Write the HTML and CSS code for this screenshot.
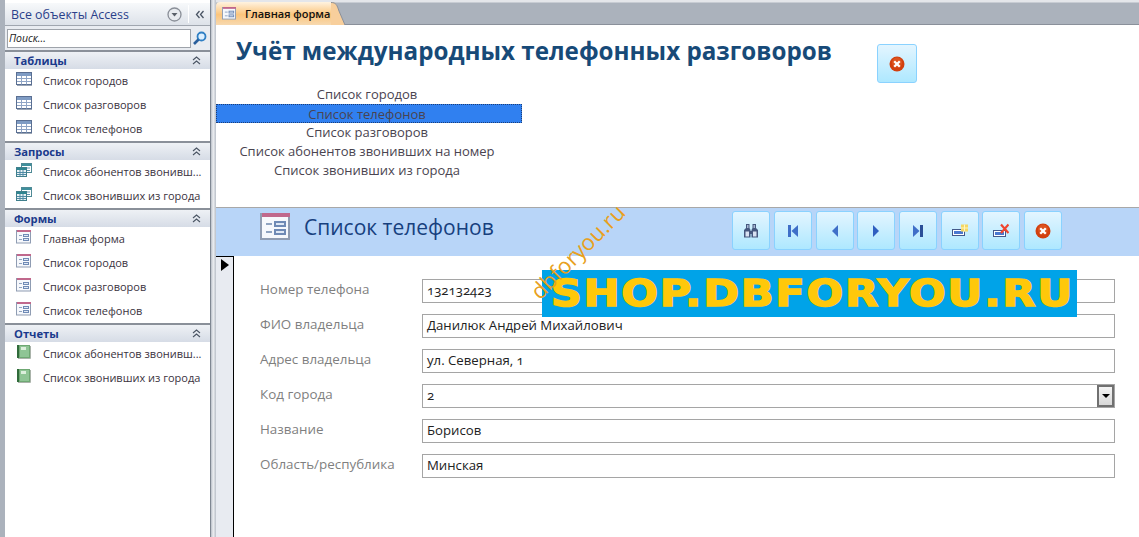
FILE: index.html
```html
<!DOCTYPE html>
<html lang="ru">
<head>
    <meta charset="utf-8">
    <title>Главная форма</title>
    <link rel="stylesheet" href="styles.css">
</head>
<body>
<svg class="defs" width="0" height="0">
    <defs>
        <symbol id="ico-table" viewBox="0 0 16 14">
            <rect x="0.5" y="0.5" width="15" height="12" fill="#fff" stroke="#5a6f92"/>
            <rect x="1" y="1" width="14" height="3" fill="#7f9cc4"/>
            <path d="M1 6.500H15M1 9.500H15M5.500 4V12.500M10.500 4V12.500" stroke="#8fa5c6" fill="none"/>
            <path d="M1 13.500H16" stroke="#9aa5b5"/>
        </symbol>
        <symbol id="ico-query" viewBox="0 0 16 14">
            <rect x="5.500" y="0.500" width="10" height="9" fill="#fff" stroke="#4f8a96"/>
            <rect x="6" y="1" width="9" height="2" fill="#3f8f9c"/>
            <path d="M8 5H14M8 7.500H14" stroke="#5f93b0"/>
            <rect x="0.500" y="4.500" width="10" height="9" fill="#eaf3f5" stroke="#3f7f8c"/>
            <rect x="1" y="5" width="9" height="2" fill="#2f8590"/>
            <path d="M1 9.500H10M1 11.500H10M4 7V13M7 7V13" stroke="#4f8aa5"/>
        </symbol>
        <symbol id="ico-form" viewBox="0 0 16 14">
            <rect x="0.500" y="0.500" width="14" height="12.500" fill="#f6f8fc" stroke="#8f9cb2"/>
            <rect x="1" y="0" width="14" height="2" fill="#c0688c"/>
            <path d="M3 5.500H6M3 9.500H6" stroke="#8fa3c0"/>
            <rect x="7.500" y="4.500" width="5" height="2" fill="#dfe8f5" stroke="#6f8ab5"/>
            <rect x="7.500" y="8.500" width="5" height="2" fill="#dfe8f5" stroke="#6f8ab5"/>
        </symbol>
        <symbol id="ico-report" viewBox="0 0 14 14">
            <rect x="0" y="0" width="13" height="13" fill="#6fa873"/>
            <rect x="0" y="0" width="2" height="13" fill="#2f6a3a"/>
            <rect x="3" y="1" width="9" height="11" fill="#8fc595"/>
            <rect x="4" y="2" width="5" height="3" fill="#dcefdc"/>
            <path d="M13.500 1V13.500H1" stroke="#aab3aa" fill="none"/>
        </symbol>
        <symbol id="ico-close" viewBox="0 0 16 16">
            <circle cx="8" cy="8" r="7.500" fill="#d2400f"/>
            <circle cx="8" cy="6.500" r="5" fill="#e2602a" opacity="0.6"/>
            <path d="M5.200 5.200L10.800 10.800M10.800 5.200L5.200 10.800" stroke="#fff" stroke-width="2.300"/>
        </symbol>
        <symbol id="ico-collapse" viewBox="0 0 9 9">
            <path d="M1 4L4.500 1L8 4M1 8L4.500 5L8 8" fill="none" stroke="#4a5564" stroke-width="1.100"/>
        </symbol>
    </defs>
</svg>

<div class="app">
    <aside class="nav">
        <div class="navTitle">
            <span class="navTitleText">Все объекты Access</span>
            <svg class="navMenu" width="15" height="15" viewBox="0 0 15 15">
                <circle cx="7.500" cy="7.500" r="6.500" fill="#e8ebef" stroke="#8a8f98" stroke-width="1.300"/>
                <path d="M4.500 6H10.500L7.500 9.500Z" fill="#5a6069"/>
            </svg>
            <span class="navSep"></span>
            <svg class="navShut" width="10" height="9" viewBox="0 0 10 9">
                <path d="M4.500 1L1.500 4.500L4.500 8M8.500 1L5.500 4.500L8.500 8" fill="none" stroke="#4a5564" stroke-width="1.300"/>
            </svg>
        </div>
        <div class="navSearch">
            <div class="searchBox">Поиск...</div>
            <svg width="15" height="15" viewBox="0 0 15 15">
                <circle cx="9.500" cy="5.500" r="4" fill="#dcefff" stroke="#2f7fc4" stroke-width="1.800"/>
                <path d="M6.500 8.500L2 13" stroke="#2a5f9c" stroke-width="2.600"/>
            </svg>
        </div>

        <div class="group">
            <div class="groupHead"><span>Таблицы</span><svg class="groupIco"><use href="#ico-collapse"/></svg></div>
            <ul class="items">
                <li><svg class="ico"><use href="#ico-table"/></svg>Список городов</li>
                <li><svg class="ico"><use href="#ico-table"/></svg>Список разговоров</li>
                <li><svg class="ico"><use href="#ico-table"/></svg>Список телефонов</li>
            </ul>
        </div>
        <div class="group">
            <div class="groupHead"><span>Запросы</span><svg class="groupIco"><use href="#ico-collapse"/></svg></div>
            <ul class="items">
                <li><svg class="ico"><use href="#ico-query"/></svg>Список абонентов звонивш...</li>
                <li><svg class="ico"><use href="#ico-query"/></svg>Список звонивших из города</li>
            </ul>
        </div>
        <div class="group">
            <div class="groupHead"><span>Формы</span><svg class="groupIco"><use href="#ico-collapse"/></svg></div>
            <ul class="items">
                <li><svg class="ico"><use href="#ico-form"/></svg>Главная форма</li>
                <li><svg class="ico"><use href="#ico-form"/></svg>Список городов</li>
                <li><svg class="ico"><use href="#ico-form"/></svg>Список разговоров</li>
                <li><svg class="ico"><use href="#ico-form"/></svg>Список телефонов</li>
            </ul>
        </div>
        <div class="group">
            <div class="groupHead"><span>Отчеты</span><svg class="groupIco"><use href="#ico-collapse"/></svg></div>
            <ul class="items">
                <li><svg class="ico"><use href="#ico-report"/></svg>Список абонентов звонивш...</li>
                <li><svg class="ico"><use href="#ico-report"/></svg>Список звонивших из города</li>
            </ul>
        </div>
    </aside>

    <div class="splitter"></div>

    <main class="main">
        <div class="tabBar">
            <div class="tab">
                <svg class="tabIco"><use href="#ico-form"/></svg>
                <span>Главная форма</span>
                <svg class="tabEdge" width="14" height="23" viewBox="0 0 14 23">
                    <path d="M0 0C5 0 6 3 8 9L14 23H0Z" fill="#f8cf9c"/>
                    <path d="M0 0.500C5 0.500 6 3 8 9L14 23" fill="none" stroke="#8a909a"/>
                </svg>
            </div>
        </div>

        <section class="formHead">
            <div class="titleRow">
                <h1 class="title">Учёт международных телефонных разговоров</h1>
                <button class="btn btnClose"><svg width="16" height="16"><use href="#ico-close"/></svg></button>
            </div>
            <ul class="listBox">
                <li>Список городов</li>
                <li class="selected">Список телефонов</li>
                <li>Список разговоров</li>
                <li>Список абонентов звонивших на номер</li>
                <li>Список звонивших из города</li>
            </ul>
        </section>

        <section class="subHead">
            <div class="subTitle">
                <svg class="subIco" width="32" height="28"><use href="#ico-form"/></svg>
                <span>Список телефонов</span>
            </div>
            <div class="toolbar">
                <button class="btn">
                    <svg width="16" height="16" viewBox="0 0 16 16">
                        <path d="M3 1H6.500V5L7.500 7V14.500H1V7L3 5ZM9.500 1H13V5L15 7V14.500H8.500V7L9.500 5Z" fill="#46587f"/>
                        <path d="M7 8H9V11H7Z" fill="#46587f"/>
                        <path d="M2.500 8.500H6V13.500H2.500ZM10 8.500H13.500V13.500H10Z" fill="#d9e2f2"/>
                        <path d="M4 2H5.500V5H4ZM10.500 2H12V5H10.500Z" fill="#a9b8d4"/>
                    </svg>
                </button>
                <button class="btn">
                    <svg width="16" height="16" viewBox="0 0 16 16"><path d="M3 2H6V14H3Z" fill="#3f6fc8"/><path d="M13 2V14L6.500 8Z" fill="#3f6fc8"/></svg>
                </button>
                <button class="btn">
                    <svg width="16" height="16" viewBox="0 0 16 16"><path d="M11 2V14L5 8Z" fill="#3f6fc8"/></svg>
                </button>
                <button class="btn">
                    <svg width="16" height="16" viewBox="0 0 16 16"><path d="M5 2V14L11 8Z" fill="#2f5fc0"/></svg>
                </button>
                <button class="btn">
                    <svg width="16" height="16" viewBox="0 0 16 16"><path d="M3 2V14L9.500 8Z" fill="#3f6fc8"/><path d="M10 2H13V14H10Z" fill="#2b4f98"/></svg>
                </button>
                <button class="btn">
                    <svg width="16" height="16" viewBox="0 0 16 16">
                        <rect x="0.500" y="6.500" width="12" height="6" fill="#fff" stroke="#44598a"/>
                        <rect x="2" y="8" width="9" height="3" fill="#4a78d0"/>
                        <rect x="9" y="1.500" width="7" height="7" fill="#f4d765"/>
                        <path d="M12.500 1.500V8.500M9 5H16" stroke="#fff6c0"/>
                    </svg>
                </button>
                <button class="btn">
                    <svg width="16" height="16" viewBox="0 0 16 16">
                        <rect x="0.500" y="7.500" width="12" height="6" fill="#fff" stroke="#44598a"/>
                        <rect x="2" y="9" width="9" height="3" fill="#4a78d0"/>
                        <path d="M8 1.500L15.500 10M15.500 1.500L8 10" stroke="#f0452e" stroke-width="2.200"/>
                    </svg>
                </button>
                <button class="btn"><svg width="16" height="16"><use href="#ico-close"/></svg></button>
            </div>
        </section>

        <section class="detail">
            <div class="recSel"><span class="recArrow"></span></div>
            <div class="fields">
                <label class="field"><span class="fieldName">Номер телефона</span><span class="fieldValue">132132423</span></label>
                <label class="field"><span class="fieldName">ФИО владельца</span><span class="fieldValue">Данилюк Андрей Михайлович</span></label>
                <label class="field"><span class="fieldName">Адрес владельца</span><span class="fieldValue">ул. Северная, 1</span></label>
                <label class="field"><span class="fieldName">Код города</span><span class="fieldValue">2<span class="comboBtn"><span class="comboArrow"></span></span></span></label>
                <label class="field"><span class="fieldName">Название</span><span class="fieldValue">Борисов</span></label>
                <label class="field"><span class="fieldName">Область/республика</span><span class="fieldValue">Минская</span></label>
            </div>
        </section>
    </main>
</div>

<div class="banner"><span class="bannerText">SHOP.DBFORYOU.RU</span></div>
<div class="stamp">dbforyou.ru</div>
</body>
</html>
```

FILE: styles.css
```css
html, body {
    margin: 0;
    padding: 0;
    height: 100%;
    overflow: hidden;
}
body {
    background: #fff;
    color: #333;
    font-family: "Open Sans", "Noto Sans", sans-serif;
    font-size: 12px;
}
ul {
    list-style: none;
    margin: 0;
    padding: 0;
}
.defs {
    position: absolute;
}
.app {
    display: grid;
    grid-template-columns: 211px 5px 1fr;
    height: 537px;
}

/* navigation pane */
.nav {
    background: #fff;
    border-left: 5px solid #abb2bc;
    border-right: 1px solid #7f8792;
    display: flex;
    flex-direction: column;
    overflow: hidden;
}
.navTitle {
    height: 23px;
    box-sizing: border-box;
    margin-top: 3px;
    display: flex;
    align-items: center;
    padding-left: 6px;
    background: linear-gradient(#f7f9fb, #dde2e9);
    border-bottom: 1px solid #a0a6af;
}
.navTitleText {
    color: #2a3f8a;
    font-size: 12.400px;
    flex: 1;
}
.navMenu {
    margin-right: 6px;
}
.navSep {
    width: 1px;
    height: 18px;
    background: #fff;
    margin-right: 6px;
}
.navShut {
    margin-right: 5px;
}
.navSearch {
    height: 24px;
    display: flex;
    align-items: center;
    gap: 1px;
    padding-left: 2px;
    background: #e9ecf1;
    border-bottom: 2px solid #8a9099;
}
.searchBox {
    width: 184px;
    height: 19px;
    box-sizing: border-box;
    line-height: 17px;
    border: 1px solid #9ea3aa;
    background: #fff;
    color: #222;
    font-style: italic;
    font-size: 10.500px;
    padding-left: 1px;
}
.group {
    border-bottom: 2px solid #8a9099;
}
.group:last-child {
    border-bottom: 0;
}
.groupHead {
    height: 17px;
    box-sizing: border-box;
    display: flex;
    align-items: center;
    justify-content: space-between;
    padding: 0 9px 0 9px;
    background: linear-gradient(#eef1f5, #d6dce6);
    color: #1a3a8c;
    font-weight: 700;
    font-size: 11.200px;
}
.groupIco {
    width: 9px;
    height: 9px;
}
.items li {
    height: 24px;
    box-sizing: border-box;
    padding-bottom: 2px;
    display: flex;
    align-items: center;
    gap: 11px;
    padding-left: 11px;
    font-size: 11px;
    color: #3a3340;
    white-space: nowrap;
}
.ico {
    width: 16px;
    height: 14px;
    margin-top: -2px;
    flex: none;
}
.splitter {
    background: linear-gradient(90deg, #b9bfc8, #eceef1 45%, #b9bfc8);
}

/* main area */
.main {
    display: flex;
    flex-direction: column;
    min-width: 0;
}
.tabBar {
    height: 25px;
    background: linear-gradient(#e4e6ea 0, #e4e6ea 2px, #abb2bc 3px);
    border-bottom: 1px solid #8a909a;
    box-sizing: border-box;
    padding-top: 2px;
    display: flex;
}
.tab {
    position: relative;
    width: 115px;
    height: 23px;
    display: flex;
    align-items: center;
    gap: 8px;
    padding-left: 6px;
    box-sizing: border-box;
    background: linear-gradient(#fff3e0, #fbc57c 55%, #f7d9b0);
    border-radius: 4px 0 0 0;
    font-size: 11px;
    font-weight: 600;
    color: #111;
}
.tabIco {
    width: 15px;
    height: 13px;
    flex: none;
}
.tabEdge {
    position: absolute;
    left: 100%;
    top: 0;
}
.formHead {
    height: 183px;
    box-sizing: border-box;
    border-bottom: 1px solid #a8a8a8;
}
.titleRow {
    display: flex;
    align-items: flex-start;
    padding: 10px 0 0 20px;
    height: 60px;
    box-sizing: border-box;
}
.title {
    margin: 0;
    width: 641px;
    font-size: 24.200px;
    line-height: 32px;
    font-weight: 700;
    color: #174a78;
    white-space: nowrap;
}
.btn {
    width: 38px;
    height: 39px;
    padding: 0;
    display: flex;
    align-items: center;
    justify-content: center;
    border: 1px solid #8ad2ff;
    border-radius: 3px;
    background: linear-gradient(#e3f5ff, #aee8ff);
}
.btnClose {
    width: 40px;
    margin-top: 9px;
}
.listBox {
    width: 306px;
    font-size: 13px;
    color: #4a4450;
}
.listBox li {
    height: 19px;
    line-height: 19px;
    text-align: center;
    white-space: nowrap;
    padding-right: 4px;
}
.listBox .selected {
    line-height: 21px;
    background: #3080f0;
    outline: 1px dotted #1c3f78;
    outline-offset: -1px;
}
.subHead {
    height: 48px;
    background: #b8d5f8;
    display: flex;
    justify-content: space-between;
    padding: 3px 77px 0 44px;
    box-sizing: border-box;
}
.subTitle {
    display: flex;
    align-items: flex-start;
    gap: 12px;
    font-size: 21px;
    line-height: 30px;
    color: #17407e;
    padding-top: 1px;
}
.subIco {
    margin-top: 1px;
}
.toolbar {
    display: flex;
    gap: 3.700px;
}
.detail {
    flex: 1;
    display: flex;
}
.recSel {
    width: 18px;
    background: #e8ebf1;
    border-top: 1px solid #000;
    border-right: 1px solid #000;
    padding: 2px 0 0 5px;
    box-sizing: border-box;
}
.recArrow {
    display: block;
    width: 0;
    height: 0;
    border-left: 8px solid #000;
    border-top: 6px solid transparent;
    border-bottom: 6px solid transparent;
}
.fields {
    flex: 1;
    padding: 23px 24px 0 27px;
    display: flex;
    flex-direction: column;
    gap: 11px;
}
.field {
    display: flex;
    align-items: flex-start;
    height: 24px;
}
.fieldName {
    width: 161px;
    margin-left: -1px;
    margin-right: 1px;
    color: #7f7f7f;
    font-size: 13.400px;
    line-height: 21px;
    white-space: nowrap;
}
.fieldValue {
    position: relative;
    flex: 1;
    height: 24px;
    line-height: 20px;
    box-sizing: border-box;
    border: 1px solid #a5a5a5;
    padding-left: 4px;
    font-size: 13.200px;
    color: #222;
    font-variant-numeric: oldstyle-nums;
}
.comboBtn {
    position: absolute;
    right: 0;
    top: 0;
    bottom: 0;
    width: 17px;
    display: flex;
    align-items: center;
    justify-content: center;
    box-sizing: border-box;
    border: 2px solid #707070;
    background: linear-gradient(#f4f4f4, #d8d8d8);
}
.comboArrow {
    width: 0;
    height: 0;
    border-top: 4px solid #000;
    border-left: 4px solid transparent;
    border-right: 4px solid transparent;
}

/* watermarks laid over the screenshot */
.banner {
    position: absolute;
    left: 542px;
    top: 270px;
    width: 535px;
    height: 47px;
    box-sizing: border-box;
    padding-left: 5px;
    background: #00a3e8;
    color: #ffc80a;
    font-family: "DejaVu Sans", sans-serif;
    font-weight: 700;
    font-size: 38px;
    line-height: 46px;
    text-align: center;
    white-space: nowrap;
    -webkit-text-stroke: 1.500px #ffc80a;
    letter-spacing: 1.500px;
}
.bannerText {
    display: inline-block;
    transform: scaleX(1.136);
}
.stamp {
    position: absolute;
    left: 507px;
    top: 239px;
    width: 140px;
    text-align: center;
    color: #e8a020;
    font-size: 22px;
    line-height: 24px;
    transform: rotate(-45deg);
    white-space: nowrap;
}
```
